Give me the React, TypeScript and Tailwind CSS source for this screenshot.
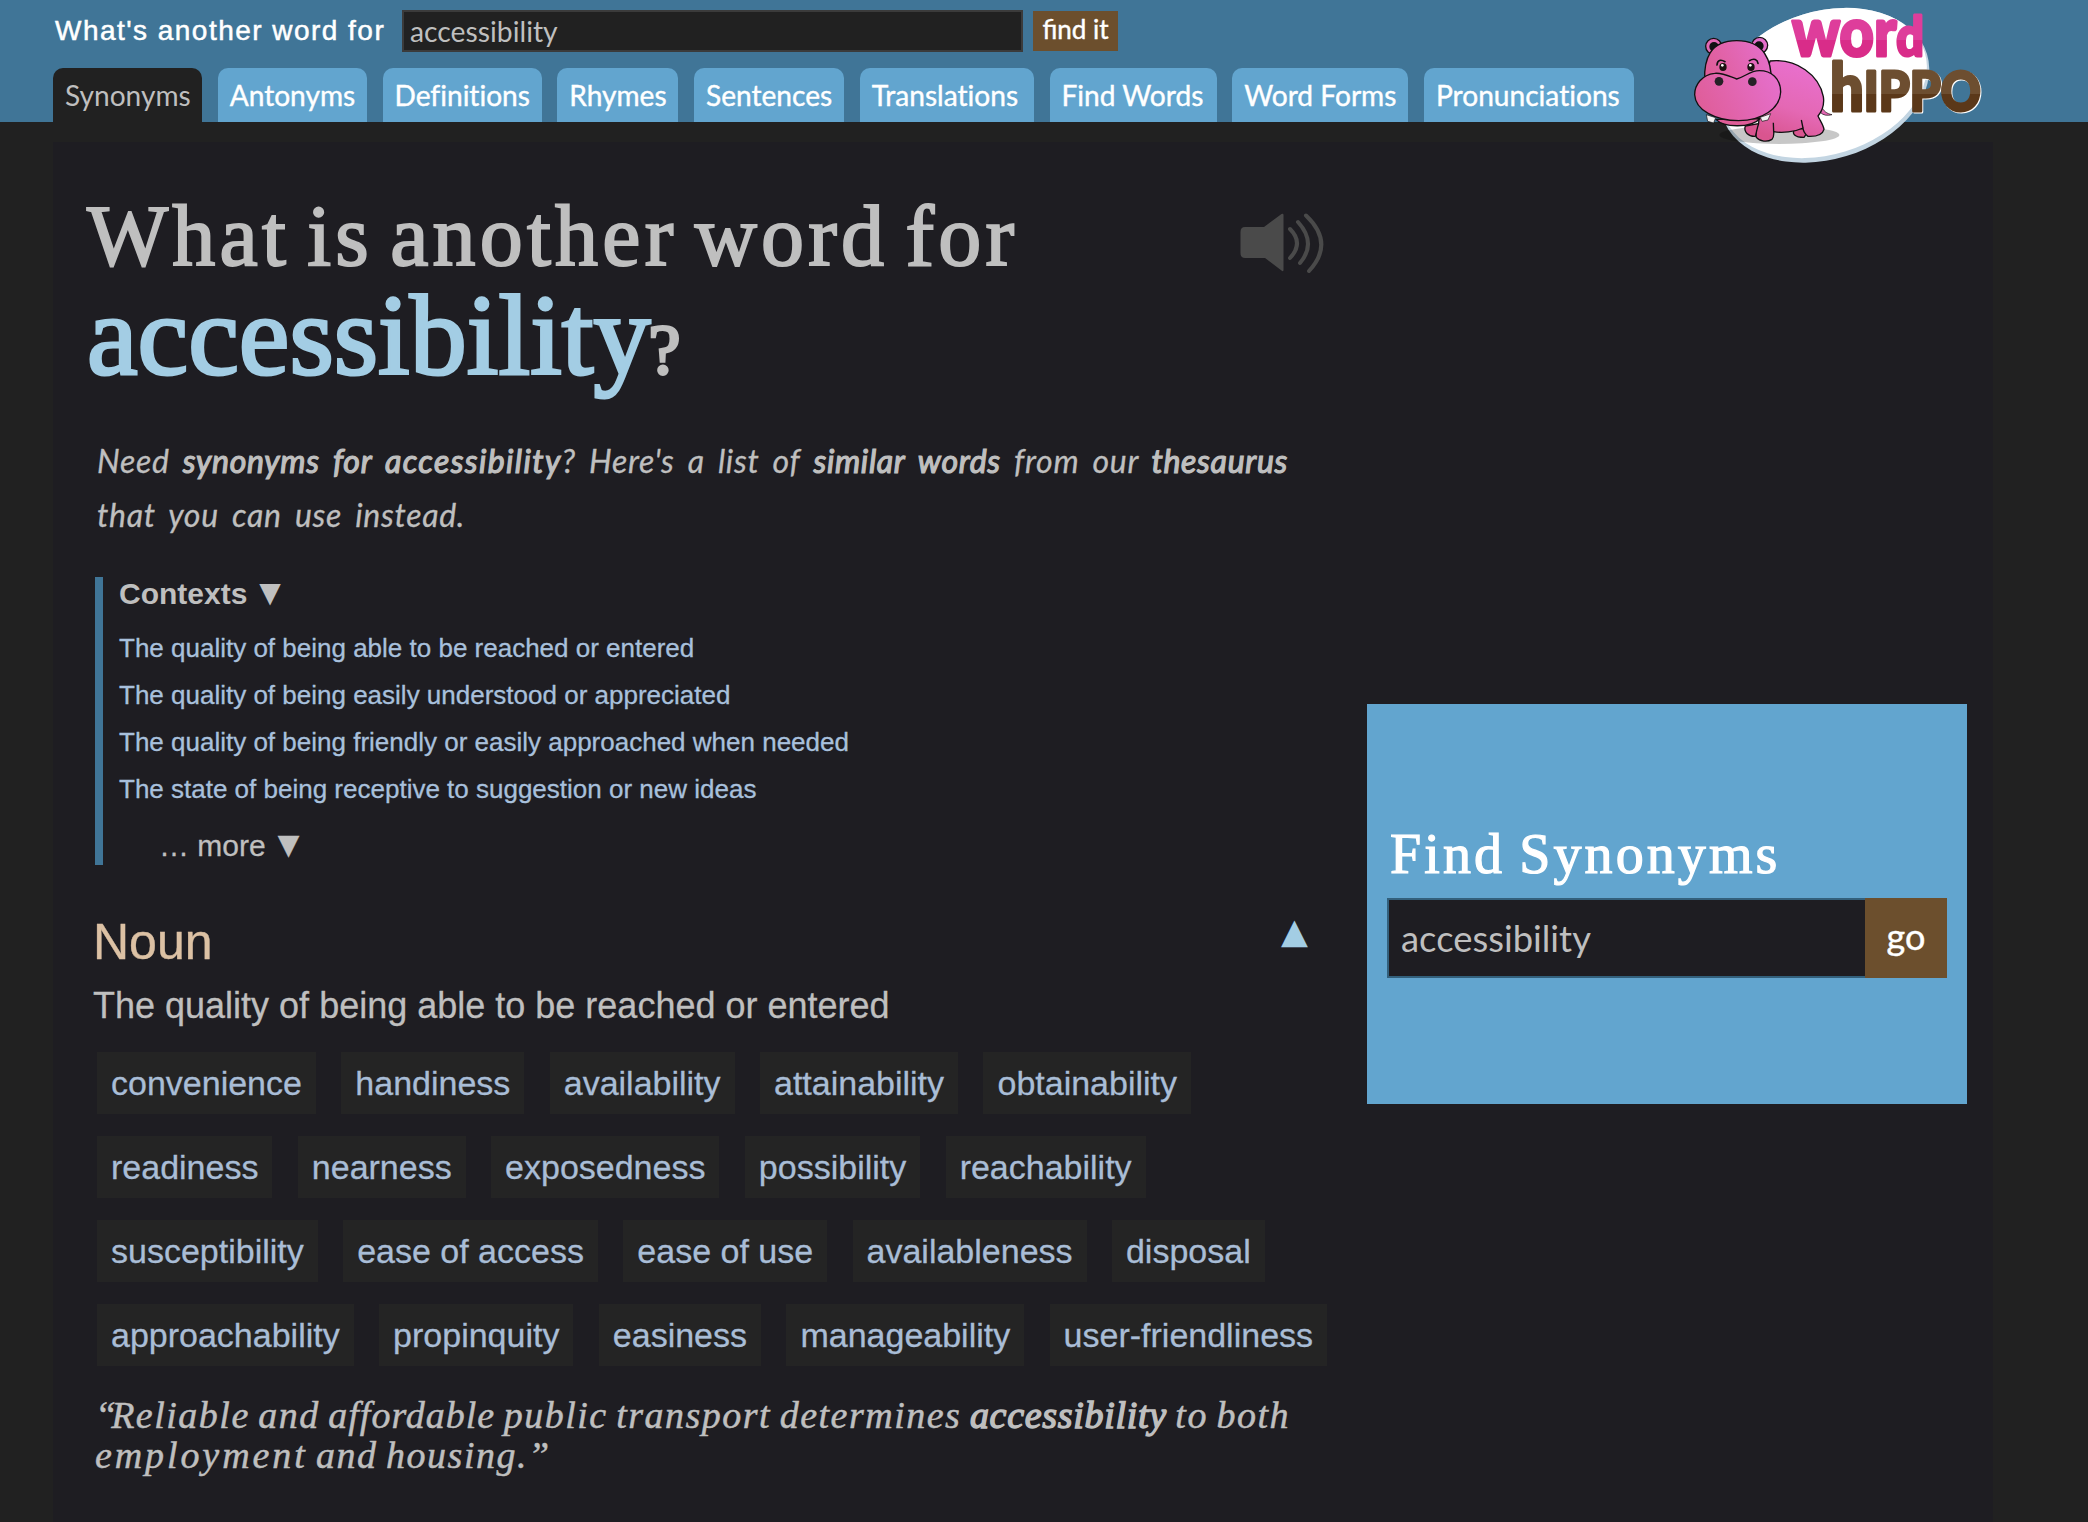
const tabs = [
  { label: "Synonyms", width: "w-[149px]" },
  { label: "Antonyms", width: "w-[149px]" },
  { label: "Definitions", width: "w-[159px]" },
  { label: "Rhymes", width: "w-[121px]" },
  { label: "Sentences", width: "w-[150px]" },
  { label: "Translations", width: "w-[174px]" },
  { label: "Find Words", width: "w-[167px]" },
  { label: "Word Forms", width: "w-[176px]" },
  { label: "Pronunciations", width: "w-[210px]" },
];

const contexts = [
  "The quality of being able to be reached or entered",
  "The quality of being easily understood or appreciated",
  "The quality of being friendly or easily approached when needed",
  "The state of being receptive to suggestion or new ideas",
];

const synonyms = [
  "convenience", "handiness", "availability", "attainability", "obtainability",
  "readiness", "nearness", "exposedness", "possibility", "reachability",
  "susceptibility", "ease of access", "ease of use", "availableness", "disposal",
  "approachability", "propinquity", "easiness", "manageability", "user-friendliness",
];

function Logo() {
  return (
    <svg className="absolute left-[1680px] top-0 h-[170px] w-[320px]" viewBox="0 0 960 510">
      <defs>
        <linearGradient id="pink" x1="0" x2="1" y1="0.6" y2="0.3">
          <stop offset="0" stopColor="#df5d98" />
          <stop offset="1" stopColor="#e56fcb" />
        </linearGradient>
        <linearGradient id="body" x1="0.7" x2="0.4" y1="0" y2="1">
          <stop offset="0" stopColor="#e970d0" />
          <stop offset="0.6" stopColor="#e468b4" />
          <stop offset="1" stopColor="#d9558f" />
        </linearGradient>
        <linearGradient id="word" gradientUnits="userSpaceOnUse" x1="0" x2="0" y1="40" y2="175">
          <stop offset="0.6" stopColor="#de3d9b" />
          <stop offset="0.6" stopColor="#d92c89" />
        </linearGradient>
        <linearGradient id="hippo" gradientUnits="userSpaceOnUse" x1="0" x2="0" y1="183" y2="342">
          <stop offset="0.62" stopColor="#6d4e30" />
          <stop offset="0.62" stopColor="#5b3819" />
        </linearGradient>
      </defs>
      <ellipse cx="434" cy="256" rx="321" ry="222" fill="#c3d5e2" transform="rotate(-17 434 256)" />
      <ellipse cx="432" cy="249" rx="316" ry="215" fill="#fff" transform="rotate(-17 432 249)" />
      <ellipse cx="298" cy="405" rx="180" ry="27" fill="#000" opacity="0.22" />

      <g stroke="#111" strokeWidth="4" strokeLinejoin="round">
        <path d="M424 318C430 333 440 341 456 344C442 348 430 346 422 338Z" fill="#e468b4" strokeWidth="2" />
        <path d="M196 378C190 395 205 410 226 409L240 370Z" fill="#d9558f" />
        <path d="M345 385C333 402 345 412 372 412L388 388Z" fill="#d9558f" />
        <path d="M270 183C350 174 418 226 430 290C434 316 424 336 414 348C420 362 430 374 432 388C428 404 408 410 384 409C374 402 370 392 369 384C344 396 306 400 281 395C282 406 280 414 276 418C262 427 240 425 229 412C226 398 232 386 236 370L240 300Z" fill="url(#body)" />
        <path d="M281 395L280 368M369 384L364 360" fill="none" />
        <circle cx="101" cy="139" r="24" fill="#e468b4" />
        <circle cx="102" cy="140" r="12" fill="#111" />
        <circle cx="239" cy="136" r="24" fill="#e56fcb" />
        <circle cx="237" cy="138" r="12" fill="#111" />
        <path d="M74 240C72 180 88 122 170 122C252 122 276 180 274 250Z" fill="url(#pink)" />
        <path d="M108 358C130 382 210 386 240 356Z" fill="#df5d98" />
        <path d="M170 237C148 229 126 217 104 220C66 224 44 254 44 284C46 330 106 362 176 362C246 361 300 326 302 276C302 236 274 212 238 212C210 212 196 230 170 237Z" fill="url(#pink)" />
        <path d="M79 344L83 364L101 369L107 353Z" fill="#f2f2f2" strokeWidth="2" />
        <path d="M241 352L246 364L264 360L272 341Z" fill="#f2f2f2" strokeWidth="2" />
      </g>
      <path d="M111 195C112 180 122 177 135 185M208 182C222 174 232 178 234 190" fill="none" stroke="#111" strokeWidth="5" strokeLinecap="round" />
      <ellipse cx="129" cy="201" rx="11" ry="12" fill="#1c1212" />
      <ellipse cx="213" cy="201" rx="11" ry="12" fill="#1c1212" />
      <circle cx="127" cy="196" r="4" fill="#fff" />
      <circle cx="211" cy="196" r="4" fill="#fff" />
      <circle cx="117" cy="244" r="13" fill="#262126" />
      <circle cx="217" cy="245" r="13" fill="#262126" />

      <text x="336" y="169" textLength="396" lengthAdjust="spacingAndGlyphs" fontSize="204" className="font-['Lato'] font-black" fill="url(#word)" stroke="url(#word)" strokeWidth="9" strokeLinejoin="round">
        wor<tspan fontSize="166">d</tspan>
      </text>
      <text x="450" y="332" textLength="452" lengthAdjust="spacingAndGlyphs" fontSize="164" className="font-['Lato'] font-black [filter:drop-shadow(3px_3px_0_#fff)]" fill="url(#hippo)" stroke="url(#hippo)" strokeWidth="9" strokeLinejoin="round">
        <tspan fontSize="198">h</tspan>IPPO
      </text>
    </svg>
  );
}

function Speaker() {
  return (
    <svg className="h-[60px] w-[86px]" viewBox="0 0 86 60" fill="none" stroke="#4a4a4a">
      <path d="M5 14H24L41.500 1Q43.500 0 43.500 2V57Q43.500 59 41.500 57.500L25 45H5Q0.500 45 0.500 40V19Q0.500 14 5 14Z" fill="#4a4a4a" stroke="none" />
      <path d="M50 16Q64 30 50 45M58 9Q77 30 60 50M66 2.500Q95 30 69 58" strokeWidth="4" strokeLinecap="round" />
    </svg>
  );
}

export default function App() {
  return (
    <div className="relative flex h-[1522px] w-[2088px] flex-col overflow-hidden bg-[#212121] font-['Liberation_Sans',sans-serif] text-[#bfbfbf]">
      <header className="flex h-[122px] shrink-0 flex-col justify-between bg-[#407597] pl-[53px] pt-[10px]">
        <form className="flex h-[42px] items-start">
          <label className="w-[349px] whitespace-nowrap pl-[2px] pt-px text-[28px] leading-[40px] tracking-[1.47px] text-white [-webkit-text-stroke:0.5px]">
            What's another word for
          </label>
          <div className="h-[42px] w-[621px] border-2 border-[#3b3b3b] bg-[#212121] pl-[6px] font-['Lato'] text-[28.3px] leading-[38px]">
            accessibility
          </div>
          <button type="button" className="ml-[10px] mt-px h-[40px] w-[85px] bg-[#6c4f2d] pb-[4px] font-['Lato'] text-[26px] leading-[36px] text-white [-webkit-text-stroke:0.4px]">
            find it
          </button>
        </form>
        <nav className="flex gap-[15.75px]">
          {tabs.map((t, i) => (
            <a
              key={t.label}
              className={`${t.width} h-[54px] shrink-0 whitespace-nowrap rounded-t-[10px] pl-[12px] font-['Lato'] text-[28.1px] leading-[54px] [font-variant-ligatures:none] ${
                i === 0 ? "bg-[#212121] text-[#bfbfbf]" : "bg-[#62a5cf] text-white [-webkit-text-stroke:0.4px]"
              }`}
            >
              {t.label}
            </a>
          ))}
        </nav>
      </header>

      <main className="ml-[53px] mt-[20px] flex w-[1940px] flex-1 items-start bg-[#1e1d22]">
        <section className="w-[1314px] shrink-0 pl-[41px]">
          <div className="flex items-start justify-between pr-[41px]">
            <h1 className="-ml-[7px] mt-[49px] font-['Liberation_Serif',serif] text-[86px] [-webkit-text-stroke:2px]">
              <span className="block h-[90px] whitespace-nowrap leading-[90px] tracking-[4.2px] [word-spacing:-8.5px]">What is another word for</span>
              <span className="block h-[109px] whitespace-nowrap leading-[109px]">
                <span className="text-[114px] text-[#a3cde4] [-webkit-text-stroke:3px]">accessibility</span>
                <span className="-ml-[2px] text-[72px] [-webkit-text-stroke:3px]">?</span>
              </span>
            </h1>
            <div className="mt-[71px]"><Speaker /></div>
          </div>

          <p className="mt-[44px] whitespace-nowrap pl-[3px] font-['Lato'] text-[32px] italic leading-[54px] tracking-[0.7px] [-webkit-text-stroke:0.3px] [word-spacing:5px] [&_b]:font-normal [&_b]:[-webkit-text-stroke:1.2px]">
            Need <b>synonyms for</b> <b className="tracking-[1.4px]">accessibility</b>? Here's a list of <b>similar words</b> from our <b>thesaurus</b>
            <br />
            that you can use instead.
          </p>

          <div className="ml-px mt-[35px] h-[288px] border-l-8 border-[#407597] pl-[16px]">
            <div className="flex h-[33px] items-center gap-[12px] text-[30px] font-bold leading-[33px]">
              Contexts <span className="pb-[2px] font-['DejaVu_Sans'] text-[28px] font-normal">▼</span>
            </div>
            <ul className="mt-[14.5px] text-[26px] leading-[47px] text-[#a8c0dc] [-webkit-text-stroke:0.3px]">
              {contexts.map((c) => (
                <li key={c}>{c}</li>
              ))}
            </ul>
            <div className="mt-[13px] flex h-[40px] items-center gap-[12px] pl-[40px] text-[30px] leading-[40px] [-webkit-text-stroke:0.3px]">
              … more <span className="pb-[2px] font-['DejaVu_Sans'] text-[28px]">▼</span>
            </div>
          </div>

          <div className="mt-[47px] flex h-[60px] justify-between pr-[59px]">
            <h2 className="-ml-px text-[50px] leading-[60px] text-[#dcc1a4] [-webkit-text-stroke:0.4px]">Noun</h2>
            <span className="font-['DejaVu_Sans'] text-[35px] leading-[38px] text-[#a3cde4]">▲</span>
          </div>
          <p className="-ml-px mt-[12px] text-[36px] leading-[44px] [-webkit-text-stroke:0.3px]">The quality of being able to be reached or entered</p>

          <div className="ml-[3px] mt-[24px] flex flex-wrap gap-x-[25.4px] gap-y-[22px] pr-[20px] text-[34px] leading-[62px] text-[#a9bdd6] [-webkit-text-stroke:0.3px]">
            {synonyms.map((s) => (
              <span key={s} className="h-[62px] whitespace-nowrap bg-[#242424] px-[14px]">{s}</span>
            ))}
          </div>

          <p className="mt-[29px] whitespace-nowrap pl-px font-['Liberation_Serif',serif] text-[38px] italic leading-[40px] tracking-[1.5px] [-webkit-text-stroke:0.5px] [word-spacing:-2.5px]">
            <span className="tracking-[-5px]">“</span>Reliable and <span className="tracking-[1px]">affordable</span> public transport determines <span className="tracking-[0.7px] [-webkit-text-stroke:1.4px]">accessibility</span> to both
            <br />
            <span className="tracking-[2.9px]">employment</span> and housing.”
          </p>
        </section>

        <aside className="mt-[562px] h-[400px] w-[600px] bg-[#62a5cf] px-[20px] pt-[118px]">
          <h3 className="whitespace-nowrap pl-[3px] font-['Liberation_Serif',serif] text-[56px] leading-[64px] tracking-[3.1px] text-white [-webkit-text-stroke:1.2px] [word-spacing:-3px]">
            Find Synonyms
          </h3>
          <div className="mt-[12px] flex h-[80px]">
            <div className="w-[478px] border-2 border-r-0 border-[#33607c] bg-[#1e1d22] pl-[12px] font-['Lato'] text-[36.4px] leading-[76px]">
              accessibility
            </div>
            <button type="button" className="w-[82px] bg-[#6c4f2d] pb-[4px] font-['Lato'] text-[36px] leading-[76px] text-white [-webkit-text-stroke:0.4px]">
              go
            </button>
          </div>
        </aside>
      </main>
      <Logo />
    </div>
  );
}
